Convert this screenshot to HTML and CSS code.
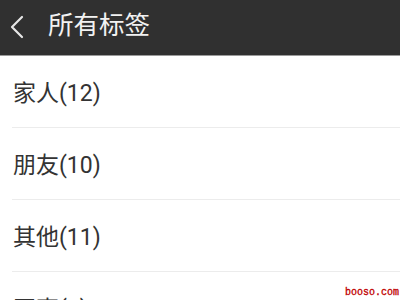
FILE: index.html
```html
<!DOCTYPE html>
<html lang="zh">
<head>
<meta charset="utf-8">
<link rel="stylesheet" href="styles.css">
</head>
<body>
<div class="page">
  <header class="bar">
    <svg class="back" width="18" height="24" viewBox="0 0 18 24"><path d="M14 2 L4 12 L14 22" fill="none" stroke="#e6e6e6" stroke-width="2.2" stroke-linecap="round" stroke-linejoin="round"/></svg>
    <h1 class="title">所有标签</h1>
  </header>
  <ul class="list">
    <li class="item">家人(12)</li>
    <li class="item">朋友(10)</li>
    <li class="item">其他(11)</li>
    <li class="item">同事(8)</li>
  </ul>
  <div class="mark">booso.com</div>
</div>
</body>
</html>
```
FILE: styles.css
```css
* { box-sizing: border-box; }
html, body { margin: 0; padding: 0; }
body { width: 400px; height: 300px; overflow: hidden; background: #fff; font-family: "Roboto", "Noto Sans CJK SC", sans-serif; }
.page { position: relative; width: 400px; height: 300px; overflow: hidden; }
.bar { height: 56px; background: #303030; border-bottom: 1px solid #9a9a9a; display: flex; align-items: center; padding-left: 8px; }
.back { display: block; margin-top: -1px; }
.title { margin: 0 0 0 22px; font-size: 25.5px; font-weight: normal; color: #f2f2f2; line-height: 1; margin-top: -3px; }
.list { list-style: none; margin: 0; padding: 0; }
.item { height: 72px; margin-left: 12px; border-bottom: 1px solid #ececec; display: flex; align-items: center; padding-left: 1px; font-size: 23px; color: #333; padding-bottom: 1px; }
.mark { position: absolute; right: 1px; bottom: 2px; font-family: "Liberation Mono", monospace; font-size: 10px; color: #c00000; line-height: 1; -webkit-text-stroke: 0.3px #c00000; }
```
